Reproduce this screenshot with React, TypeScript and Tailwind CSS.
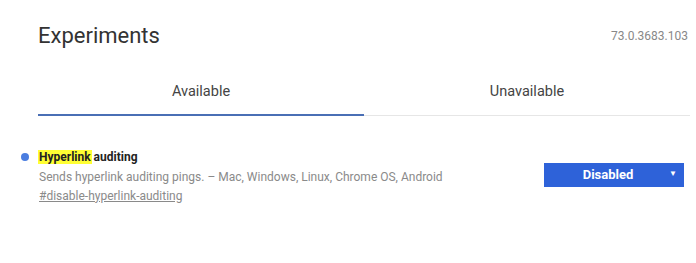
export default function App() {
  return (
    <div className="w-[696px] h-[263px] bg-white font-['Roboto',sans-serif] overflow-hidden">
      <div className="flex items-start justify-between pl-[38px] pr-[8px] pt-[24px]">
        <h1 className="text-[22px] leading-[24px] text-[#333]">Experiments</h1>
        <span className="text-[12px] leading-[14px] mt-[5px] text-[#888]">73.0.3683.103</span>
      </div>

      <div className="flex ml-[38px] mr-[6px] mt-[33px] border-b border-[#e6e6e6]">
        <div className="flex-1 text-center text-[14.5px] text-[#444] pb-[11px] border-b-2 border-[#4a6fb5] -mb-px">
          Available
        </div>
        <div className="flex-1 text-center text-[14.5px] text-[#444] pb-[11px]">Unavailable</div>
      </div>

      <div className="flex items-start justify-between pl-[21px] pr-[12px] mt-[33px]">
        <div className="flex items-start gap-[10px]">
          <span className="mt-[4px] w-[8px] h-[8px] rounded-full bg-[#4a7de0] shrink-0" />
          <div className="flex flex-col">
            <div className="text-[12px] leading-[16px] font-bold text-[#222]">
              <mark className="bg-[#ffff33] text-[#222] px-px -mx-px">Hyperlink</mark> auditing
            </div>
            <p className="text-[12px] leading-[18px] mt-[3px] text-[#8a8a8a]">
              Sends hyperlink auditing pings. – Mac, Windows, Linux, Chrome OS, Android
            </p>
            <a className="text-[12px] leading-[18px] mt-px text-[#8a8a8a] underline">
              #disable-hyperlink-auditing
            </a>
          </div>
        </div>
        <button className="mt-[14px] w-[140px] h-[24px] bg-[#2e62d9] text-white text-[13px] font-bold flex items-center relative">
          <span className="flex-1 text-center pr-[12px]">Disabled</span>
          <span className="absolute right-[7px] top-[5px] text-[8px]">▼</span>
        </button>
      </div>
    </div>
  );
}
